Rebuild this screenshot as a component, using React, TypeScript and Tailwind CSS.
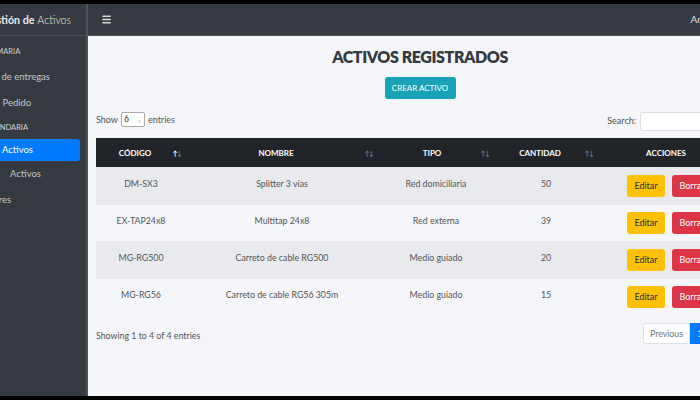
import { Menu } from "lucide-react";

type Activo = {
  codigo: string;
  nombre: string;
  tipo: string;
  cantidad: number;
};

const activos: Activo[] = [
  { codigo: "DM-SX3", nombre: "Splitter 3 vías", tipo: "Red domiciliaria", cantidad: 50 },
  { codigo: "EX-TAP24x8", nombre: "Multitap 24x8", tipo: "Red externa", cantidad: 39 },
  { codigo: "MG-RG500", nombre: "Carreto de cable RG500", tipo: "Medio guiado", cantidad: 20 },
  { codigo: "MG-RG56", nombre: "Carreto de cable RG56 305m", tipo: "Medio guiado", cantidad: 15 },
];

function SortIcon({ active = false }: { active?: boolean }) {
  return (
    <span className="absolute right-[4px] top-1/2 -translate-y-1/2 flex items-center text-[7px] leading-none">
      <span className={active ? "text-white" : "text-[#6c757d]"}>↑</span>
      <span className="text-[#6c757d] -ml-[1px]">↓</span>
    </span>
  );
}

export default function App() {
  return (
    <div
      className="w-[700px] h-[400px] overflow-hidden bg-black py-[4px]"
      style={{ fontFamily: "Lato, 'Liberation Sans', sans-serif" }}
    >
      <div className="flex h-[392px] w-[752px]">
        {/* --- Sidebar (scrolled off to the left) --- */}
        <aside className="w-[88px] shrink-0 overflow-hidden bg-[#343a40] border-r-2 border-[#4b545c]">
          <div className="h-[32px] flex items-center border-b border-[#4b545c] whitespace-nowrap">
            <span className="-ml-[17px] text-[10.7px] text-white/90 pt-[1px]">
              <span className="font-bold">Gestión de</span> <span className="font-light">Activos</span>
            </span>
          </div>
          <nav className="pt-[4px] text-[#c2c7d0] whitespace-nowrap">
            <div className="h-[24px] flex items-center text-[7.5px] text-[#d0d4db] -ml-[15px]">PRIMARIA</div>
            <div className="h-[26px] flex items-center text-[9.5px] -ml-[35px]">Registro de entregas</div>
            <div className="h-[26px] flex items-center text-[9.5px]">&nbsp;Pedido</div>
            <div className="h-[24px] flex items-center text-[7.5px] text-[#d0d4db] -ml-[19px]">SECUNDARIA</div>
            <div className="h-[22px] -mt-[1px] flex items-center bg-[#007bff] text-white text-[9.5px] mr-[6px] rounded-r-[3px]">
              <span className="pl-[2px]">Activos</span>
            </div>
            <div className="h-[26px] flex items-center text-[9.5px] pl-[10px]">Activos</div>
            <div className="h-[26px] flex items-center text-[9.5px] -ml-[41px]">Proveedores</div>
          </nav>
        </aside>

        <div className="flex-1 flex flex-col">
          {/* --- Navbar --- */}
          <header className="h-[32px] shrink-0 bg-[#343a40] border-b border-[#4b545c] flex items-center justify-between pl-[13px] pr-[30px]">
            <Menu className="w-[11px] h-[11px] text-white/80" strokeWidth={3} />
            <span className="text-[10px] text-white/80">Andrea</span>
          </header>

          {/* --- Content --- */}
          <main className="flex-1 bg-[#f4f6f9] px-[8px] text-[#555]">
            <h1 className="text-center text-[16px] font-extrabold text-[#343a40] tracking-[-0.4px] pt-[10px] leading-[22px]">
              ACTIVOS REGISTRADOS
            </h1>
            <div className="flex justify-center mt-[9px]">
              <button className="h-[22px] w-[71px] rounded-[3px] bg-[#17a2b8] text-white text-[8px]">
                CREAR ACTIVO
              </button>
            </div>

            <div className="flex items-center justify-between mt-[11px] h-[19px] text-[9px]">
              <div className="flex items-center gap-[3px]">
                <span>Show</span>
                <span className="w-[24px] h-[15px] bg-white border border-[#aaa] rounded-[2px] flex items-center justify-between px-[2px] text-[8.5px] text-[#333]">
                  6<span className="text-[6px] text-[#888]">⌄</span>
                </span>
                <span>entries</span>
              </div>
              <div className="flex items-center gap-[4px] mt-[3px]">
                <span>Search:</span>
                <span className="w-[104px] h-[19px] bg-white border border-[#ddd] rounded-[2px]" />
              </div>
            </div>

            <table className="mt-[9px] w-[648px] table-fixed border-collapse text-[8.8px]">
              <colgroup>
                <col className="w-[90px]" />
                <col className="w-[192px]" />
                <col className="w-[116px]" />
                <col className="w-[104px]" />
                <col className="w-[146px]" />
              </colgroup>
              <thead>
                <tr className="h-[29px] bg-[#212529] text-white text-[8px] font-bold">
                  <th className="relative pr-[12px]">CÓDIGO<SortIcon active /></th>
                  <th className="relative pr-[12px]">NOMBRE<SortIcon /></th>
                  <th className="relative pr-[8px]">TIPO<SortIcon /></th>
                  <th className="relative pr-[12px]">CANTIDAD<SortIcon /></th>
                  <th className="pr-[10px]">ACCIONES</th>
                </tr>
              </thead>
              <tbody>
                {activos.map((a, i) => (
                  <tr key={a.codigo} className={`${i % 2 === 0 ? "h-[38px] bg-[#e8eaed]" : "h-[36px]"}`}>
                    <td className="text-center pb-[4px]">{a.codigo}</td>
                    <td className="text-center pb-[4px]">{a.nombre}</td>
                    <td className="text-center pb-[4px]">{a.tipo}</td>
                    <td className="text-center pb-[4px]">{a.cantidad}</td>
                    <td className="pl-[29px]">
                      <div className="flex gap-[7px]">
                        <button className="h-[22px] w-[38px] rounded-[3px] bg-[#ffc107] text-[#1f2d3d] text-[9px]">
                          Editar
                        </button>
                        <button className="h-[22px] w-[40px] rounded-[3px] bg-[#dc3545] text-white text-[9px]">
                          Borrar
                        </button>
                      </div>
                    </td>
                  </tr>
                ))}
              </tbody>
            </table>

            <div className="flex items-center justify-between mt-[8px] text-[8.8px]">
              <span className="mt-[4px]">Showing 1 to 4 of 4 entries</span>
              <div className="flex h-[21px]">
                <span className="w-[47px] bg-white border border-[#dee2e6] rounded-l-[3px] flex items-center justify-center text-[#6c757d]">
                  Previous
                </span>
                <span className="w-[20px] bg-[#007bff] text-white flex items-center justify-center">1</span>
                <span className="w-[34px] bg-white border border-[#dee2e6] rounded-r-[3px] flex items-center justify-center text-[#6c757d]">
                  Next
                </span>
              </div>
            </div>
          </main>
        </div>
      </div>
    </div>
  );
}
